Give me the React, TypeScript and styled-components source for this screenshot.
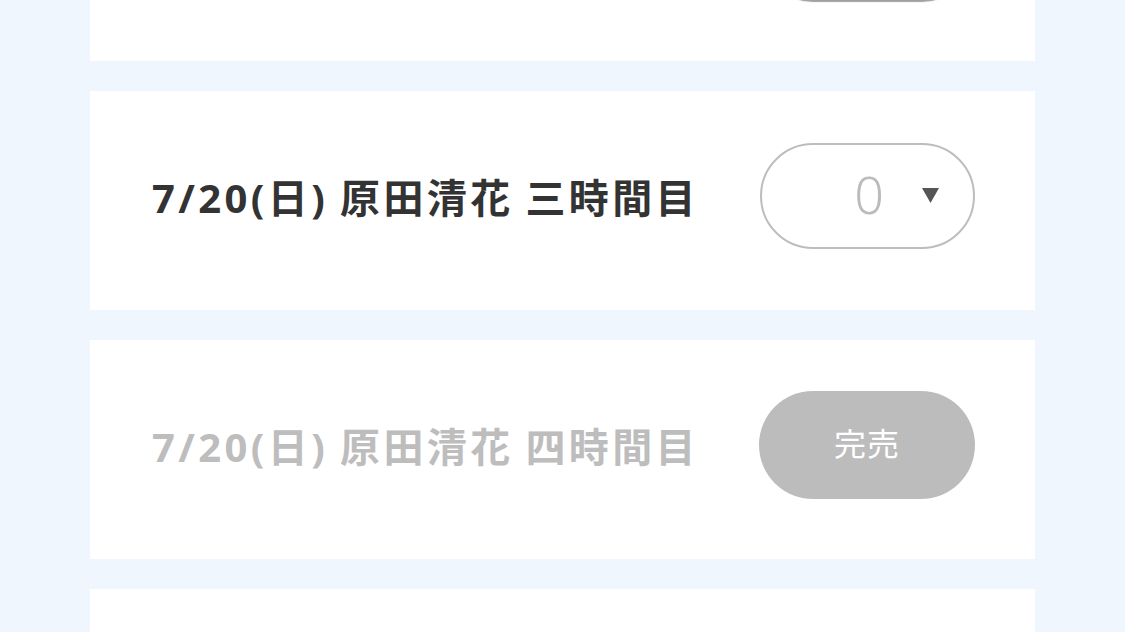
import styled, {createGlobalStyle} from 'styled-components';

type Slot = {
  date: string;
  name: string;
  period: string;
  count: number;
  soldOut: boolean;
  active?: boolean;
};

const slots: Slot[] = [
  {date: '7/20(日)', name: '原田清花', period: '二時間目', count: 1, soldOut: false, active: true},
  {date: '7/20(日)', name: '原田清花', period: '三時間目', count: 0, soldOut: false},
  {date: '7/20(日)', name: '原田清花', period: '四時間目', count: 0, soldOut: true},
  {date: '7/20(日)', name: '原田清花', period: '五時間目', count: 0, soldOut: false},
];

const GlobalStyle = createGlobalStyle`
  html, body {
    margin: 0;
    padding: 0;
    background: #eff6fe;
    overflow: hidden;
  }
  body {
    font-family: "Noto Sans", "Noto Sans CJK JP", sans-serif;
  }
`;

const Page = styled.div`
  width: 1125px;
  height: 632px;
  overflow: hidden;
  background: #eff6fe;
`;

// scrolled list: first card is mostly above the viewport
const List = styled.div`
  display: flex;
  flex-direction: column;
  gap: 30px;
  width: 945px;
  margin: -158px 0 0 90px;
`;

const Card = styled.div`
  display: flex;
  align-items: center;
  justify-content: space-between;
  height: 219px;
  box-sizing: border-box;
  padding: 0 60px 10px 62px;
  background: #ffffff;
`;

const Title = styled.div<{$disabled: boolean}>`
  font-family: "Noto Sans", "Noto Sans CJK JP", sans-serif;
  font-size: 40px;
  font-weight: 700;
  letter-spacing: 3.4px;
  word-spacing: -2px;
  white-space: nowrap;
  color: ${p => (p.$disabled ? '#bdbdbd' : '#333333')};
`;

const Select = styled.div<{$active: boolean}>`
  display: flex;
  align-items: center;
  justify-content: flex-end;
  gap: 38px;
  width: 215px;
  height: 106px;
  box-sizing: border-box;
  padding-right: 34px;
  border: 2px solid ${p => (p.$active ? '#8a8a8a' : '#bdbdbd')};
  border-radius: 53px;
  background: #ffffff;
  box-shadow: ${p => (p.$active ? '0 2px 1px #a0a0a0' : 'none')};
`;

const Count = styled.span`
  font-family: "Noto Sans", sans-serif;
  font-size: 52px;
  font-weight: 300;
  line-height: 1;
  margin-top: -4px;
  color: #bbbbbb;
`;

const SoldOut = styled.div`
  display: flex;
  align-items: center;
  justify-content: center;
  width: 216px;
  height: 108px;
  box-sizing: border-box;
  padding-bottom: 6px;
  border-radius: 54px;
  background: #bcbcbc;
  color: #ffffff;
  font-family: "Noto Sans CJK JP", sans-serif;
  font-size: 32px;
  letter-spacing: 1px;
`;

const Arrow = () => (
  <svg width="17" height="15" viewBox="0 0 17 15">
    <polygon points="0,0 17,0 8.5,15" fill="#555555" />
  </svg>
);

export default function App() {
  return (
    <Page>
      <GlobalStyle />
      <List>
        {slots.map((s, i) => (
          <Card key={i}>
            <Title $disabled={s.soldOut}>
              {s.date} {s.name} {s.period}
            </Title>
            {s.soldOut ? (
              <SoldOut>完売</SoldOut>
            ) : (
              <Select $active={!!s.active}>
                <Count>{s.count}</Count>
                <Arrow />
              </Select>
            )}
          </Card>
        ))}
      </List>
    </Page>
  );
}
